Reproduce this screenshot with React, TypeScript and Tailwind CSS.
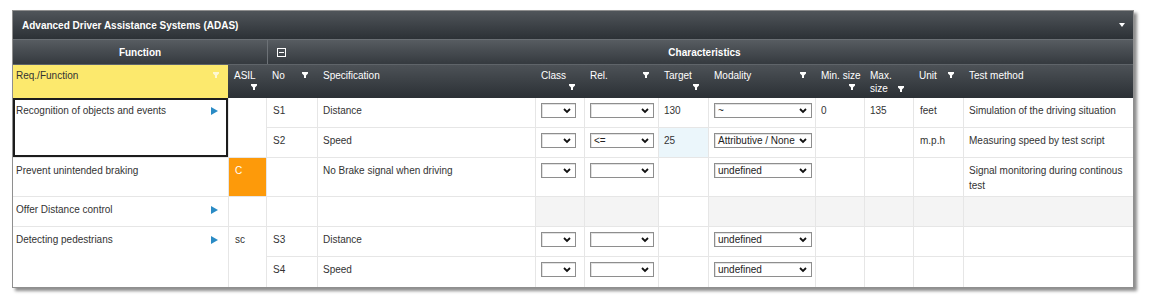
import React from "react";

const COLS =
  "grid-cols-[215px_37px_50px_217px_48px_73px_49px_106px_48px_48px_49px_169px]";

const Filter = ({ faint = false }: { faint?: boolean }) => (
  <svg width="6" height="6" viewBox="0 0 6 6" className={faint ? "opacity-70" : ""}>
    <path d="M0 0h6v1.5L4 3.5V6H2V3.5L0 1.5z" fill="#fff" />
  </svg>
);

const Arrow = () => (
  <svg width="7" height="8" viewBox="0 0 7 8" className="mt-[4px] shrink-0">
    <polygon points="0,0 7,4 0,8" fill="#2a8bc5" />
  </svg>
);

const Select = ({ w, value = "" }: { w: string; value?: string }) => (
  <div
    className={`${w} relative mt-[1px] flex h-[15px] items-center border border-[#8e8e8e] bg-white pl-[3px] text-[10px] leading-none text-[#222] shadow-[inset_1px_1px_0_#e2e2e2]`}
  >
    {value}
    <svg width="8" height="6" viewBox="0 0 8 6" className="absolute right-[4px] top-[4px]">
      <path d="M1 1l3 3 3-3" stroke="#111" strokeWidth="1.8" fill="none" />
    </svg>
  </div>
);

type Spec = {
  no: string;
  spec: string;
  selects: boolean;
  rel?: string;
  target?: string;
  targetHi?: boolean;
  modality?: string;
  min?: string;
  max?: string;
  unit?: string;
  method?: string;
  gray?: boolean;
};

type Group = {
  req: string;
  arrow?: boolean;
  asil?: string;
  orange?: boolean;
  selected?: boolean;
  specs: Spec[];
};

const groups: Group[] = [
  {
    req: "Recognition of objects and events",
    arrow: true,
    selected: true,
    specs: [
      { no: "S1", spec: "Distance", selects: true, target: "130", modality: "~", min: "0", max: "135", unit: "feet", method: "Simulation of the driving situation" },
      { no: "S2", spec: "Speed", selects: true, rel: "<=", target: "25", targetHi: true, modality: "Attributive / None", unit: "m.p.h", method: "Measuring speed by test script" },
    ],
  },
  {
    req: "Prevent unintended braking",
    asil: "C",
    orange: true,
    specs: [
      { no: "", spec: "No Brake signal when driving", selects: true, modality: "undefined", method: "Signal monitoring during continous test" },
    ],
  },
  {
    req: "Offer Distance control",
    arrow: true,
    specs: [{ no: "", spec: "", selects: false, gray: true }],
  },
  {
    req: "Detecting pedestrians",
    arrow: true,
    asil: "sc",
    specs: [
      { no: "S3", spec: "Distance", selects: true, modality: "undefined" },
      { no: "S4", spec: "Speed", selects: true, modality: "undefined" },
    ],
  },
];

const headers = [
  { label: "ASIL", filter: "below" },
  { label: "No", filter: "inline" },
  { label: "Specification", filter: "" },
  { label: "Class", filter: "below" },
  { label: "Rel.", filter: "inline" },
  { label: "Target", filter: "below" },
  { label: "Modality", filter: "inline" },
  { label: "Min. size", filter: "below" },
  { label: "Max.", filter: "wrap" },
  { label: "Unit", filter: "inline" },
  { label: "Test method", filter: "" },
];

const cell = "bg-white pl-[5px] pt-[4px]";

export default function App() {
  return (
    <div className="min-h-[302px] bg-white pl-[12px] pt-[10px] font-['Liberation_Sans',Arial,sans-serif] text-[10px] leading-[15px] text-[#333]">
      <div className="w-[1122px] border border-[#8f8f8f] shadow-[3px_3px_3px_rgba(0,0,0,0.45)]">
        {/* title bar */}
        <div className="flex h-[28px] items-center justify-between bg-gradient-to-b from-[#50555a] to-[#2c3136] pl-[9px] pr-[8px] font-bold text-white">
          <span>Advanced Driver Assistance Systems (ADAS)</span>
          <svg width="6" height="4" viewBox="0 0 6 4">
            <polygon points="0,0 6,0 3,4" fill="#fff" />
          </svg>
        </div>

        {/* group header */}
        <div className="flex h-[25px] border-t border-[#6a6f74] bg-gradient-to-b from-[#575c61] to-[#353a3f] font-bold text-white">
          <div className="flex w-[254px] items-center justify-center">Function</div>
          <div className="flex flex-1 items-center border-l border-[#6d7277]">
            <svg width="9" height="9" viewBox="0 0 9 9" className="ml-[9px]">
              <rect x="0.5" y="0.5" width="8" height="8" fill="none" stroke="#fff" />
              <rect x="2" y="4" width="5" height="1" fill="#fff" />
            </svg>
            <div className="flex-1 pr-[10px] text-center">Characteristics</div>
          </div>
        </div>

        {/* column headers */}
        <div className={`grid h-[34px] ${COLS} gap-x-px border-t border-[#5f6469] bg-gradient-to-b from-[#4d5257] to-[#2b3035] leading-[13px] text-white`}>
          <div className="flex justify-between bg-[#fce96d] pl-[3px] pr-[9px] pt-[4px] text-[#333]">
            <span>Req./Function</span>
            <span className="pt-[3px]">
              <Filter faint />
            </span>
          </div>
          {headers.map((h) => (
            <div key={h.label} className="pl-[5px] pr-[9px] pt-[4px]">
              {h.filter === "inline" ? (
                <div className="flex justify-between">
                  <span>{h.label}</span>
                  <span className="pt-[3px]">
                    <Filter />
                  </span>
                </div>
              ) : (
                <div className="whitespace-nowrap">{h.label}</div>
              )}
              {h.filter === "below" && (
                <div className="mt-[2px] flex justify-end">
                  <Filter />
                </div>
              )}
              {h.filter === "wrap" && (
                <div className="flex items-center justify-between">
                  <span>size</span>
                  <Filter />
                </div>
              )}
            </div>
          ))}
        </div>

        {/* body */}
        <div className={`grid ${COLS} grid-rows-[29px_29px_38px_29px_29px_30px] gap-px bg-[#e6e6e6]`}>
          {groups.map((g) => {
            const span = g.specs.length === 2 ? "row-span-2" : "";
            return (
              <React.Fragment key={g.req}>
                <div
                  className={`${span} flex justify-between bg-white pl-[3px] pr-[10px] pt-[5px] ${
                    g.selected ? "shadow-[inset_0_0_0_2px_#1c1c1c]" : ""
                  }`}
                >
                  <span>{g.req}</span>
                  {g.arrow && <Arrow />}
                </div>
                <div className={`${span} pl-[6px] pt-[5px] ${g.orange ? "bg-[#fd9a0a] text-white" : "bg-white"}`}>
                  {g.asil}
                </div>
                {g.specs.map((s, i) => {
                  const bg = s.gray ? "bg-[#f4f4f4] pl-[5px] pt-[4px]" : cell;
                  return (
                    <React.Fragment key={i}>
                      <div className="bg-white pl-[6px] pt-[5px]">{s.no}</div>
                      <div className="bg-white pl-[5px] pt-[5px]">{s.spec}</div>
                      <div className={bg}>{s.selects && <Select w="w-[35px]" />}</div>
                      <div className={bg}>{s.selects && <Select w="w-[64px]" value={s.rel} />}</div>
                      <div className={`${s.targetHi ? "bg-[#ebf6fb]" : "bg-white"} pl-[5px] pt-[5px]`}>{s.target}</div>
                      <div className={bg}>{s.modality && <Select w="w-[98px]" value={s.modality} />}</div>
                      <div className={`${bg} !pt-[5px]`}>{s.min}</div>
                      <div className={`${bg} !pt-[5px]`}>{s.max}</div>
                      <div className={`${bg} !pl-[6px] !pt-[5px]`}>{s.unit}</div>
                      <div className={`${bg} pr-[6px] !pt-[5px]`}>{s.method}</div>
                    </React.Fragment>
                  );
                })}
              </React.Fragment>
            );
          })}
        </div>
      </div>
    </div>
  );
}
